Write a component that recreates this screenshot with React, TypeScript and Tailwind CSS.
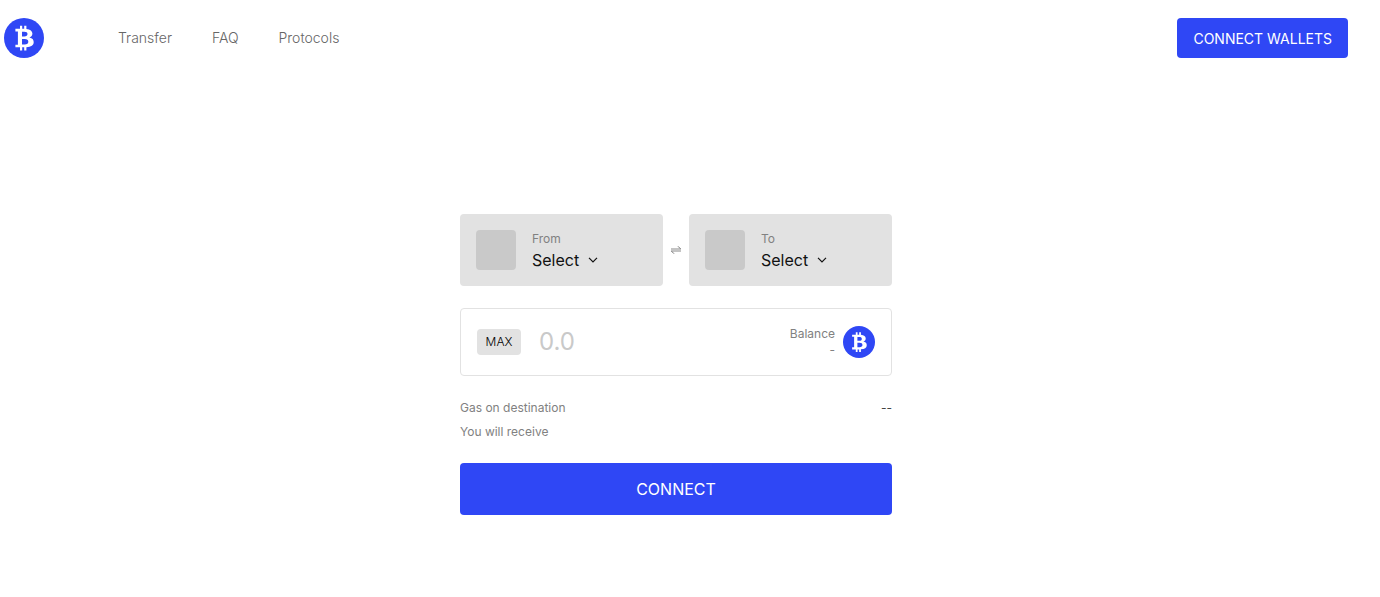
import React from "react";

function BitcoinMark({ className }: { className: string }) {
  return (
    <svg viewBox="0 0 40 40" className={className} aria-hidden="true">
      <circle cx="20" cy="20" r="20" fill="#2f47f5" />
      <path
        fill="#fff"
        fillRule="evenodd"
        d="M16 7.700h2.200v3.100h2V7.700h2.200v3.200c3.900.4 6 2.100 6 4.700 0 1.900-1 3.200-2.900 3.900 2.800.6 4.200 2.200 4.200 4.500 0 3.200-2.600 5-7.300 5.200v3.400h-2.200v-3.300h-2v3.300H16v-3.300h-4.600v-2.600h2.500V13.400h-2.500v-2.600H16V7.700Zm2 6v4.800h2.300c2.100 0 3.200-.8 3.200-2.400s-1.100-2.400-3.200-2.400H18Zm0 7.300v5.500h2.700c2.400 0 3.600-.9 3.600-2.700s-1.200-2.800-3.600-2.800H18Z"
      />
    </svg>
  );
}

function ChainPicker({ id, label }: { id: string; label: string }) {
  return (
    <div className="flex h-18 min-w-0 flex-1 items-center gap-4 rounded bg-[#e2e2e2] px-4">
      <div className="size-10 shrink-0 rounded bg-[#c9c9c9]" />
      <div className="flex flex-col">
        <label htmlFor={id} className="text-xs leading-5 text-[#818181]">
          {label}
        </label>
        <div className="flex items-center gap-2">
          <select
            id={id}
            className="cursor-pointer appearance-none bg-transparent text-base leading-[22px] text-[#111]"
          >
            <option>Select</option>
          </select>
          <svg viewBox="0 0 10 6" className="pointer-events-none h-1.5 w-2.5" aria-hidden="true">
            <path d="M1 .8 5 4.900 9 .8" fill="none" stroke="#111" strokeWidth="1.200" />
          </svg>
        </div>
      </div>
    </div>
  );
}

export default function App() {
  return (
    <div className="min-h-screen bg-white pr-8 pl-1 font-['Inter',sans-serif]">
      <header className="flex items-center justify-between pt-4.5">
        <div className="flex items-center gap-[74px]">
          <a href="#home" aria-label="Home">
            <BitcoinMark className="size-10" />
          </a>
          <nav className="flex gap-10 text-sm font-light text-[#666]">
            <a href="#transfer">Transfer</a>
            <a href="#faq">FAQ</a>
            <a href="#protocols">Protocols</a>
          </nav>
        </div>
        <button type="button" className="h-10 rounded bg-[#2f47f5] px-4 pt-0.5 text-sm text-white">
          CONNECT WALLETS
        </button>
      </header>

      <main className="mx-auto mt-39 w-full max-w-[432px]">
        <div className="flex items-center">
          <ChainPicker id="from" label="From" />
          <button type="button" aria-label="Swap chains" className="flex w-6.5 justify-center">
            <svg viewBox="0 0 10 8" className="h-2 w-2.5" aria-hidden="true">
              <path d="M0 2h10v4H0z" fill="#c4c4c4" />
              <path d="M7 .3 9.500 2.800M3 7.700.500 5.200" fill="none" stroke="#777" />
            </svg>
          </button>
          <ChainPicker id="to" label="To" />
        </div>

        <div className="mt-5.5 flex h-17 items-center rounded border border-[#e2e2e2] px-4">
          <button type="button" className="h-6.5 w-11 rounded bg-[#e2e2e2] text-xs font-light text-black">
            MAX
          </button>
          <input
            aria-label="Amount"
            placeholder="0.0"
            inputMode="decimal"
            className="ml-4.5 min-w-0 flex-1 bg-transparent text-2xl outline-none placeholder:text-[#c9c9c9]"
          />
          <div className="mr-2 text-right text-xs text-[#818181]">
            <div>Balance</div>
            <div>-</div>
          </div>
          <BitcoinMark className="size-8" />
        </div>

        <dl className="mt-5 text-xs leading-6 text-[#818181]">
          <div className="flex justify-between">
            <dt>Gas on destination</dt>
            <dd className="text-[#444]">--</dd>
          </div>
          <div className="flex justify-between">
            <dt>You will receive</dt>
            <dd />
          </div>
        </dl>

        <button type="button" className="mt-[19px] h-13 w-full rounded bg-[#2f47f5] text-base text-white">
          CONNECT
        </button>
      </main>
    </div>
  );
}
